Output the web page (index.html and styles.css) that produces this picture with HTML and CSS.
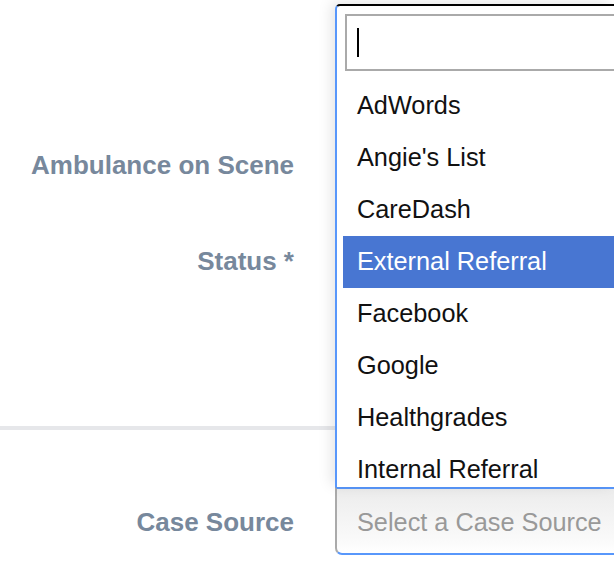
FILE: index.html
```html
<html>
	<head>
		<meta charset="UTF-8"/>
		<link rel="stylesheet" href="styles.css">
	</head>
	<body>
		<div id="formBox">
			<div class="linha primeira">
				<label class="rotulo">Ambulance on Scene</label>
				<div class="campo"></div>
			</div>
			<div class="linha">
				<label class="rotulo">Status *</label>
				<div class="campo"></div>
			</div>
			<div class="divisor"></div>
			<div class="linha origem">
				<label class="rotulo">Case Source</label>
				<div class="campo seletorBox">
					<div class="seletor">Select a Case Source</div>
					<div class="dropBox">
						<div class="buscaBox"><span class="cursor"></span></div>
						<ul class="resultados">
							<li>AdWords</li>
							<li>Angie's List</li>
							<li>CareDash</li>
							<li class="destacado">External Referral</li>
							<li>Facebook</li>
							<li>Google</li>
							<li>Healthgrades</li>
							<li>Internal Referral</li>
						</ul>
					</div>
				</div>
			</div>
		</div>
	</body>
</html>
```

FILE: styles.css
```css
html,body{
	margin:0;
	overflow:hidden;
	background:#fff;
	font-family:"Liberation Sans", Arial, sans-serif;
}
#formBox{
	width:614px;
	height:588px;
	overflow:hidden;
}
.linha{
	display:flex;
	align-items:center;
	height:96px;
}
.primeira{
	margin-top:117px;
}
.rotulo{
	width:294px;
	flex:none;
	text-align:right;
	font-size:26px;
	font-weight:bold;
	color:#77889c;
}
.campo{
	margin-left:41px;
	flex:none;
	width:279px;
}
.divisor{
	margin-top:117px;
	width:335px;
	height:4px;
	background:#e6e7ea;
}
.origem{
	margin-top:57px;
	height:68px;
}
.origem .rotulo{
	padding-top:3px;
}
.seletorBox{
	position:relative;
	height:68px;
}
.seletor{
	box-sizing:border-box;
	height:68px;
	line-height:66px;
	padding-left:20px;
	border-left:2px solid #aaa;
	border-top:2px solid #5897fb;
	border-bottom:2px solid #5897fb;
	border-bottom-left-radius:7px;
	background:linear-gradient(to bottom, #ececec 0%, #fafafa 80%, #fff 100%);
	color:#999;
	font-size:25.3px;
	white-space:nowrap;
	overflow:hidden;
}
.dropBox{
	position:absolute;
	left:0;
	bottom:100%;
	box-sizing:border-box;
	width:279px;
	height:483px;
	display:flex;
	flex-direction:column;
	padding:8px 0 0 8px;
	background:#fff;
	border-top:2px solid #000;
	border-left:2px solid #5897fb;
	border-top-left-radius:5px;
	box-shadow:-4px -2px 14px rgba(0,0,0,0.1);
	overflow:hidden;
}
.buscaBox{
	box-sizing:border-box;
	height:57px;
	flex:none;
	border:2px solid #aaa;
	border-right:none;
	padding:12px 0 0 10px;
}
.cursor{
	display:block;
	width:2px;
	height:29px;
	background:#000;
}
.resultados{
	list-style:none;
	margin:9px 0 0 -2px;
	padding:0;
	flex:1;
	overflow:hidden;
}
.resultados li{
	height:52px;
	line-height:50px;
	padding-left:14px;
	font-size:25.3px;
	color:#111;
	white-space:nowrap;
}
.resultados .destacado{
	background:#4876d2;
	color:#fff;
}
```
